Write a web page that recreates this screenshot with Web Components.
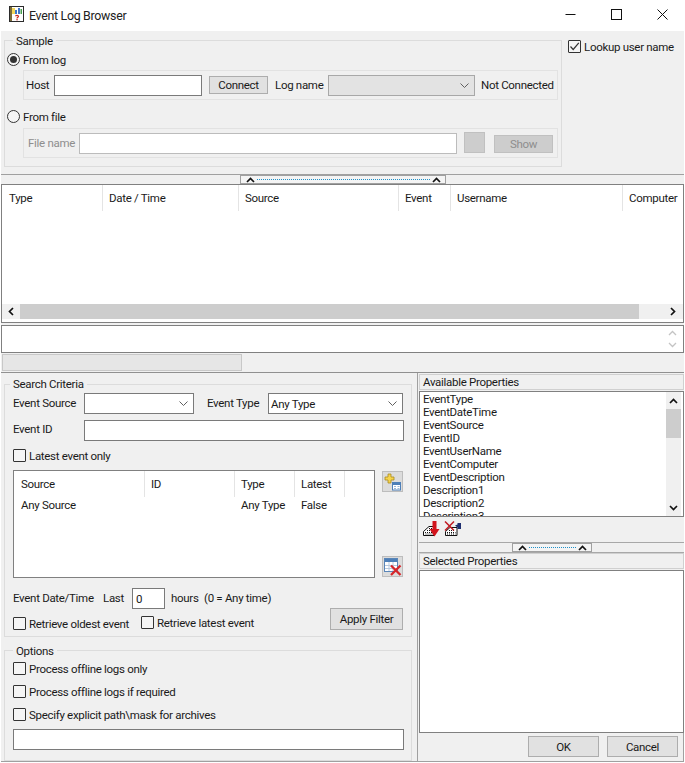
<!DOCTYPE html>
<html lang="en">
<head>
<meta charset="utf-8">
<title>Event Log Browser</title>
<style>
html,body{margin:0;padding:0;background:#fff;}
body{font:11.500px Roboto,"Liberation Sans",sans-serif;letter-spacing:-.3px;color:#1a1a1a;width:685px;height:763px;overflow:hidden;}
</style>
</head>
<body>
<log-browser></log-browser>
<script>
const BASE=':host{box-sizing:border-box}*,*::before,*::after{box-sizing:border-box}';
function reg(name,css,html,init){
  customElements.define(name,class extends HTMLElement{
    constructor(){super();this.attachShadow({mode:'open'});}
    connectedCallback(){
      if(this._done)return;this._done=true;
      const h=typeof html==='function'?html(this):html;
      this.shadowRoot.innerHTML='<style>'+BASE+css+'</style>'+h;
      if(init)init(this);
    }
  });
}
const CHEV='<svg width="9" height="5" viewBox="0 0 9 5"><path d="M.5.5 4.5 4.5 8.5.5" fill="none" stroke="#606060"/></svg>';
const UP=(c='#111',w=1.7)=>`<svg width="9" height="6" viewBox="0 0 9 6"><path d="M1 5 4.5 1.5 8 5" fill="none" stroke="${c}" stroke-width="${w}"/></svg>`;
const DOWN=(c='#111',w=1.7)=>`<svg width="9" height="6" viewBox="0 0 9 6"><path d="M1 1 4.5 4.5 8 1" fill="none" stroke="${c}" stroke-width="${w}"/></svg>`;
const LEFT=(c='#111',w=1.7)=>`<svg width="6" height="9" viewBox="0 0 6 9"><path d="M5 1 1.5 4.5 5 8" fill="none" stroke="${c}" stroke-width="${w}"/></svg>`;
const RIGHT=(c='#111',w=1.7)=>`<svg width="6" height="9" viewBox="0 0 6 9"><path d="M1 1 4.5 4.5 1 8" fill="none" stroke="${c}" stroke-width="${w}"/></svg>`;

reg('x-title',`
:host{display:flex;height:31px;background:#fff;align-items:center;font-size:12.400px;color:#222}
.ic{margin-left:9px;width:15px;height:16px;flex:none;margin-top:-3px}
.t{margin-left:5px;flex:1;margin-top:-1px}
.b{width:46px;height:31px;display:flex;align-items:center;justify-content:center;flex:none;margin-top:-2px}
`,`<svg class="ic" viewBox="0 0 15 16"><rect x=".5" y=".5" width="14" height="15" fill="#fff" stroke="#2b2b2b"/><rect x="1" y="1" width="2" height="14" fill="#7a6a3a"/><rect x="3" y="2" width="3" height="6" fill="#f2d55a"/><rect x="6" y="4" width="2" height="4" fill="#3f76c8"/><rect x="9" y="2" width="2" height="6" fill="#3f76c8"/><rect x="11.5" y="3" width="1.5" height="5" fill="#48a04e"/><path d="M6.5 10.2c0-1.2 3-1.2 3 0 0 1-1.500 1-1.500 2.200" fill="none" stroke="#d0281e" stroke-width="1.200"/><rect x="7.400" y="13" width="1.300" height="1.400" fill="#d0281e"/></svg>
<span class="t"><slot></slot></span>
<span class="b"><svg width="11" height="11" viewBox="0 0 11 11"><path d="M.5 5.500h10" stroke="#111"/></svg></span>
<span class="b"><svg width="11" height="11" viewBox="0 0 11 11"><rect x=".5" y=".5" width="10" height="10" fill="none" stroke="#111"/></svg></span>
<span class="b"><svg width="11" height="11" viewBox="0 0 11 11"><path d="M.5.5l10 10M10.500.5l-10 10" stroke="#111" fill="none"/></svg></span>`);

reg('x-group',`
:host{display:block;position:relative;border:1px solid #dcdcdc}
.l{position:absolute;background:#f0f0f0;padding:0 3px;line-height:15px}
`,h=>`<span class="l" style="left:${h.getAttribute('lx')||7}px;top:${h.getAttribute('ly')||-7}px">${h.getAttribute('legend')}</span><slot></slot>`);

reg('x-panel',`:host{display:flex;align-items:center;border:1px solid #e2e2e2;height:30px}`,`<slot></slot>`);

reg('x-check',`
:host{display:inline-flex;align-items:center;height:13px;white-space:nowrap}
.b{width:13px;height:13px;border:1px solid #333;border-radius:1px;margin-right:3px;flex:none;display:flex;align-items:center;justify-content:center;background:#f5f5f5}
`,h=>`<span class="b">${h.hasAttribute('checked')?'<svg width="11" height="11" viewBox="0 0 11 11"><path d="M1.500 5.500 4.200 8.500 9.800 1.800" fill="none" stroke="#333" stroke-width="1.200"/></svg>':''}</span><slot></slot>`);

reg('x-radio',`
:host{display:inline-flex;align-items:center;height:13px;white-space:nowrap}
.b{width:13px;height:13px;border:1px solid #333;border-radius:50%;margin-right:3px;flex:none;display:flex;align-items:center;justify-content:center;background:#f5f5f5}
i{width:7px;height:7px;border-radius:50%;background:#333}
`,h=>`<span class="b">${h.hasAttribute('checked')?'<i></i>':''}</span><slot></slot>`);

reg('x-input',`
:host{display:flex;align-items:center;height:21px;background:#fff;border:1px solid #7a7a7a;padding-left:3px;flex:none}
:host([disabled]){border-color:#bcbcbc}
`,`<slot></slot>`);

reg('x-combo',`
:host{display:flex;align-items:center;height:21px;background:#fff;border:1px solid #7a7a7a;padding:0 5px 0 2px;flex:none;justify-content:space-between}
:host([disabled]){background:#e3e3e3;border-color:#a8a8a8}
`,`<span><slot></slot></span>${CHEV}`);

reg('x-btn',`
:host{display:flex;align-items:center;justify-content:center;height:18px;background:#e1e1e1;border:1px solid #adadad;flex:none}
:host([disabled]){background:#cdcdcd;border-color:#c0c0c0;color:#8e8e8e}
`,`<slot></slot>`);

reg('x-label',`:host{display:block;flex:none;white-space:nowrap}:host([dim]){color:#8e8e8e}`,`<slot></slot>`);

reg('x-split',`
:host{display:block;height:9px}
.h{height:9px;display:flex;align-items:center;justify-content:space-between;padding:0 4px 0 5px;border:1px solid #a0a0a0;border-top-width:1px;background:#f4f4f4}
i{flex:1;margin:0 2px;border-top:1px dotted #1f90c8;height:0}
`,h=>`<div class="h" style="margin-left:${h.getAttribute('x')}px;width:${h.getAttribute('w')}px">${UP()}<i></i>${UP()}</div>`);

reg('x-listview',`
:host{display:block;background:#fff;overflow:hidden}
.r{display:flex;white-space:nowrap}
.r span{flex:none;padding-left:6px;overflow:hidden}
.r span:first-child{padding-left:7px}
.hd span{height:26px;line-height:26px;border-right:1px solid #e4e4e4}
.hd span:last-child{border-right:0;flex:1}
.row span{height:16px;line-height:16px}
`,h=>{
  const w=h.getAttribute('widths').split(',');
  const head=h.getAttribute('head').split('|');
  const rows=(h.getAttribute('rows')||'').split(';').filter(Boolean);
  const row=(c,cl)=>`<div class="r ${cl}">`+c.map((t,i)=>`<span style="${w[i]?'width:'+w[i]+'px':''}">${t}</span>`).join('')+'</div>';
  return row(head,'hd')+rows.map(r=>row(r.split('|'),'row')).join('');
});

reg('x-hscroll',`
:host{display:flex;height:15px;background:#f0f0f0;align-items:center}
.a{width:18px;display:flex;justify-content:center;flex:none}
.t{width:619px;height:15px;background:#cdcdcd;flex:none}
.s{flex:1}
`,`<span class="a">${LEFT()}</span><span class="t"></span><span class="s"></span><span class="a" style="margin-right:1px">${RIGHT()}</span>`);

reg('x-props',`
:host{display:flex;background:#fff;border:1px solid #808080;overflow:hidden}
.l{flex:1;padding:1px 0 0 3px;line-height:13px;overflow:hidden;white-space:nowrap}
.l div{height:13px}
.s{width:15px;margin:0 2px 0 0;flex:none;display:flex;flex-direction:column;align-items:center;background:#f0f0f0}
.s b{height:17px;display:flex;align-items:center;justify-content:center;flex:none}
.s u{display:block;width:15px;height:29px;background:#cdcdcd;flex:none}
.s em{flex:1}
`,h=>{const items=(h.getAttribute('items')||'').split(',').filter(Boolean);
 return items.length?`<div class="l">${items.map(t=>`<div>${t}</div>`).join('')}</div><div class="s"><b>${UP()}</b><u></u><em></em><b>${DOWN()}</b></div>`:''});

reg('x-detail',`
:host{display:flex;justify-content:flex-end;background:#fff;border:1px solid #808080;height:28px}
.s{width:15px;margin-right:3px;display:flex;flex-direction:column;align-items:center;justify-content:center;gap:6px}
`,`<div class="s">${UP('#c4c4c4',1.300)}${DOWN('#c4c4c4',1.300)}</div>`);

const ICONS={
add:`<svg width="19" height="19" viewBox="0 0 19 19"><path d="M5 2h3v3h3v3H8v3H5V8H2V5h3z" fill="#f6d44c" stroke="#a98a1e" stroke-width=".8"/><rect x="9.500" y="10.500" width="8" height="7.500" fill="#fff" stroke="#4d7fb8"/><rect x="10" y="11" width="7" height="2" fill="#4d7fb8"/><path d="M11 14.500h2M14.500 14.500h2M11 16.500h2M14.500 16.500h2" stroke="#9bb6d6"/></svg>`,
del:`<svg width="19" height="19" viewBox="0 0 19 19"><rect x="1.500" y="1.500" width="13" height="13" fill="#fff" stroke="#5a86b8"/><rect x="2" y="2" width="12" height="3" fill="#4d7fb8"/><path d="M2 8.500h12M2 11.500h12M6 5v9M10 5v9" stroke="#b7c9de"/><path d="M8 8.500l9.500 9.500M17.500 8.500 8 18" stroke="#d6262a" stroke-width="2.300"/></svg>`,
down:`<svg width="17" height="16" viewBox="0 0 17 16"><path d="M.5 14.500V10.500L6 5.500h5v9z" fill="#fff" stroke="#111"/><path d="M2 11.500h7M2.500 13h7M4 9.500h5M6 7.500h4" stroke="#111" stroke-dasharray="1 1"/><path d="M9.500 0h4v8h3L11.500 15.500 6.500 8h3z" fill="#d2141c"/></svg>`,
rem:`<svg width="18" height="16" viewBox="0 0 18 16"><path d="M1.500 14.500V10.500L6 6.500h7v8z" fill="#fff" stroke="#111"/><path d="M3 11.500h8.500M3 13h8.500M5 9.500h6" stroke="#111" stroke-dasharray="1 1"/><path d="M1 .5l9 9M10 .5l-9 9" stroke="#c01a22" stroke-width="1.500"/><path d="M11 4.500l2.500-1v-1.500h3.500v6h-3.500V6.500z" fill="#1f2f70"/></svg>`};
reg('x-icon',`:host{display:inline-flex;flex:none}`,h=>ICONS[h.getAttribute('name')]);

reg('x-sample',`
:host{display:flex;height:144px;background:#f0f0f0;border-bottom:1px solid #a0a0a0;padding:9px 0 0 3px}
x-group{width:558px;height:127px;padding:12px 0 0 2px}
x-panel{margin-left:16px;width:535px}
.c{display:flex}
.lk{margin:0 0 0 6px;align-self:flex-start}
`,`
<x-group legend="Sample" lx="8">
  <x-radio checked class="c">From log</x-radio>
  <x-panel style="margin-top:4px">
    <x-label style="width:28px;margin-left:2px">Host</x-label>
    <x-input style="width:148px"></x-input>
    <x-btn style="width:59px;margin-left:7px">Connect</x-btn>
    <x-label style="width:53px;margin-left:7px">Log name</x-label>
    <x-combo disabled style="width:147px"></x-combo>
    <x-label style="margin-left:6px">Not Connected</x-label>
  </x-panel>
  <x-radio class="c" style="margin-top:10px">From file</x-radio>
  <x-panel style="margin-top:5px">
    <x-label dim style="width:51px;margin-left:4px">File name</x-label>
    <x-input disabled style="width:378px"></x-input>
    <x-btn disabled style="width:21px;height:21px;margin:-1px 0 0 7px"></x-btn>
    <x-btn disabled style="width:59px;margin:1px 0 0 9px">Show</x-btn>
  </x-panel>
</x-group>
<x-check checked class="lk">Lookup user name</x-check>`);

reg('x-left',`
:host{display:block;width:417px;flex:none;padding:11px 0 0 3px;border-right:1px solid #a0a0a0;background:#f0f0f0}
x-group{width:408px}
.g1{height:253px;padding:8px 0 0 8px}
.g2{height:111px;margin-top:13px;padding:11px 0 0 8px}
.row{display:flex;align-items:center}
.c{display:flex}
.side{display:flex;flex-direction:column;justify-content:space-between;margin-left:7px;width:21px;padding:1px 0;height:108px}
.ib{width:21px;height:21px;background:#dcdcdc;border-color:#bdbdbd}
.up1{margin-top:-2px}
.up2{margin-top:-4px}
`,`
<x-group legend="Search Criteria" lx="5" ly="-8" class="g1">
  <div class="row">
    <x-label class="up1" style="width:71px">Event Source</x-label>
    <x-combo style="width:110px"></x-combo>
    <x-label class="up1" style="width:61px;margin-left:13px">Event Type</x-label>
    <x-combo style="width:135px">Any Type</x-combo>
  </div>
  <div class="row" style="margin-top:6px">
    <x-label class="up2" style="width:71px">Event ID</x-label>
    <x-input style="width:320px"></x-input>
  </div>
  <x-check class="c" style="margin-top:8px">Latest event only</x-check>
  <div class="row" style="margin-top:8px;align-items:stretch">
    <x-listview style="width:362px;height:108px;border:1px solid #808080" widths="131,90,60,50," head="Source|ID|Type|Latest|" rows="Any Source||Any Type|False|"></x-listview>
    <div class="side">
      <x-btn class="ib"><x-icon name="add"></x-icon></x-btn>
      <x-btn class="ib"><x-icon name="del"></x-icon></x-btn>
    </div>
  </div>
  <div class="row" style="margin-top:10px;align-items:flex-start;width:390px">
    <div style="flex:1">
      <div class="row">
        <x-label class="up1" style="width:90px">Event Date/Time</x-label>
        <x-label class="up1" style="width:29px">Last</x-label>
        <x-input style="width:33px">0</x-input>
        <x-label class="up1" style="width:33px;margin-left:6px">hours</x-label>
        <x-label class="up1">(0 = Any time)</x-label>
      </div>
      <div class="row" style="margin-top:8px;align-items:flex-start">
        <x-check style="width:128px">Retrieve oldest event</x-check>
        <x-check style="margin-top:-1px">Retrieve latest event</x-check>
      </div>
    </div>
    <x-btn style="width:73px;height:22px;align-self:flex-end">Apply Filter</x-btn>
  </div>
</x-group>
<x-group legend="Options" lx="8" class="g2">
  <x-check class="c">Process offline logs only</x-check>
  <x-check class="c" style="margin-top:10px">Process offline logs if required</x-check>
  <x-check class="c" style="margin-top:10px">Specify explicit path\\mask for archives</x-check>
  <x-input style="width:391px;margin-top:8px"></x-input>
</x-group>`);

reg('x-head',`:host{display:flex;align-items:center;height:16px;border:1px solid #d0d0d0;padding-left:3px;line-height:14px}`,`<slot></slot>`);

reg('x-right',`
:host{display:flex;flex-direction:column;flex:1;padding:1px 0 0 1px;background:#f0f0f0}
.tb{display:flex;align-items:flex-start;padding:4px 0 0 4px;gap:4px;border-bottom:1px solid #a8a8a8;flex:none;height:26px}
.sp{height:10px;border-bottom:1px solid #a8a8a8;flex:none}
.ft{display:flex;justify-content:flex-end;padding:3px 5px 0 0;gap:8px;border-right:1px solid #a0a0a0;flex:1}
`,`
<x-head>Available Properties</x-head>
<x-props style="height:126px;margin-top:1px;flex:none" items="EventType,EventDateTime,EventSource,EventID,EventUserName,EventComputer,EventDescription,Description1,Description2,Description3"></x-props>
<div class="tb"><x-icon name="down"></x-icon><x-icon name="rem"></x-icon></div>
<div class="sp"><x-split x="93" w="80"></x-split></div>
<x-head>Selected Properties</x-head>
<x-props style="height:163px;margin-top:1px;flex:none"></x-props>
<div class="ft"><x-btn style="width:71px;height:21px">OK</x-btn><x-btn style="width:71px;height:21px">Cancel</x-btn></div>`);

reg('log-browser',`
:host{display:block;width:685px;height:763px}
.app{width:683px;margin-left:1px;height:731px;display:flex;flex-direction:column;background:#f0f0f0;border-bottom:1px solid #a0a0a0}
x-split{flex:none}
.tbl{height:139px;border:1px solid #808080;background:#fff;display:flex;flex-direction:column;flex:none}
.tbl x-listview{flex:1}
.tbl x-hscroll{margin-bottom:3px}
.st{height:20px;flex:none;padding-top:1px;border-bottom:1px solid #909090}
.st div{width:240px;height:17px;margin-left:1px;background:#e6e6e6;border:1px solid #c8c8c8}
.lo{display:flex;flex:1;min-height:0}
`,`
<x-title>Event Log Browser</x-title>
<div class="app">
  <x-sample></x-sample>
  <x-split x="239" w="206"></x-split>
  <div class="tbl">
    <x-listview widths="101,136,160,52,172," head="Type|Date / Time|Source|Event|Username|Computer"></x-listview>
    <x-hscroll></x-hscroll>
  </div>
  <x-detail style="margin-top:2px;flex:none"></x-detail>
  <div class="st"><div></div></div>
  <div class="lo"><x-left></x-left><x-right></x-right></div>
</div>`);
</script>
</body>
</html>
